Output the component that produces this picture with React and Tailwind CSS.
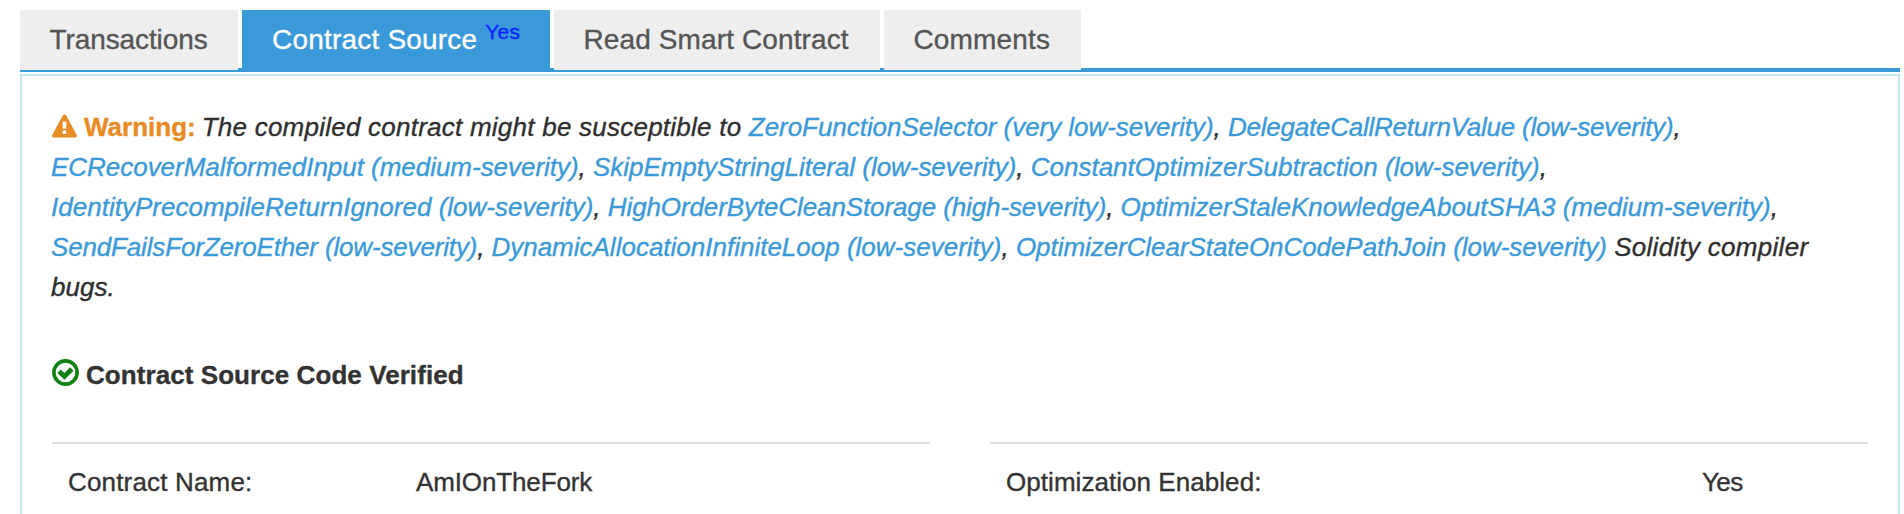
const tabs = [
  { label: 'Transactions', width: 'w-[218px]', tracking: 'tracking-[-0.1px]' },
  { label: 'Contract Source', badge: 'Yes', active: true, width: 'w-[308px]', tracking: 'tracking-[0.2px]' },
  { label: 'Read Smart Contract', width: 'w-[326px]', tracking: 'tracking-[0.12px]' },
  { label: 'Comments', width: 'w-[197px]', tracking: 'tracking-[0.15px]' },
];

const lines = [
  [
    ['ZeroFunctionSelector (very low-severity)', ', ', 'tracking-[-0.05px]'],
    ['DelegateCallReturnValue (low-severity)', ',', 'tracking-[-0.23px]'],
  ],
  [
    ['ECRecoverMalformedInput (medium-severity)', ', ', 'tracking-[-0.03px]'],
    ['SkipEmptyStringLiteral (low-severity)', ', ', 'tracking-[-0.04px]'],
    ['ConstantOptimizerSubtraction (low-severity)', ',', 'tracking-[0.01px]'],
  ],
  [
    ['IdentityPrecompileReturnIgnored (low-severity)', ', ', 'tracking-[0.01px]'],
    ['HighOrderByteCleanStorage (high-severity)', ', ', 'tracking-[-0.11px]'],
    ['OptimizerStaleKnowledgeAboutSHA3 (medium-severity)', ',', 'tracking-[0px]'],
  ],
  [
    ['SendFailsForZeroEther (low-severity)', ', ', 'tracking-[-0.16px]'],
    ['DynamicAllocationInfiniteLoop (low-severity)', ', ', 'tracking-[0px]'],
    ['OptimizerClearStateOnCodePathJoin (low-severity)', ' ', 'tracking-[-0.06px]'],
    ['', 'Solidity compiler', 'tracking-[0.29px]'],
  ],
];

function WarningIcon() {
  return (
    <svg viewBox="0 0 1792 1664" className="mr-[7px] inline-block h-[24px] w-[25px] align-[-2px]" fill="currentColor">
      <path d="M1024 1375v-190q0-14-9.5-23.5t-22.5-9.5h-192q-13 0-22.5 9.5t-9.5 23.5v190q0 14 9.5 23.5t22.5 9.5h192q13 0 22.5-9.5t9.5-23.5zm-2-374l18-459q0-12-10-19-13-11-24-11h-220q-11 0-24 11-10 7-10 21l17 457q0 10 10 16.5t24 6.5h185q14 0 23.5-6.5t10.5-16.5zm-14-934l768 1408q35 63-2 126-17 29-46.5 46t-63.5 17h-1536q-34 0-63.5-17t-46.5-46q-37-63-2-126l768-1408q17-31 47-49t65-18 65 18 47 49z" />
    </svg>
  );
}

function VerifiedIcon() {
  return (
    <svg viewBox="0 0 27 27" className="h-[27px] w-[27px]" fill="none" stroke="#108010">
      <circle cx="13.5" cy="13.5" r="11.6" strokeWidth="3.6" />
      <path d="M7 12.2l5.4 5.2 7.4-7.4" strokeWidth="4.8" />
    </svg>
  );
}

export default function App() {
  return (
    <div className="h-[514px] overflow-hidden bg-white pl-5 pr-1 pt-[10px] font-['Liberation_Sans',Arial,sans-serif] text-[26px] leading-[40px] text-[#333] [-webkit-text-stroke:0.35px_currentColor]">
      <div className="h-[62px] border-b-2 border-[#3a99d9]">
        <div className="flex h-[60px] gap-1 bg-[linear-gradient(#3a99d9,#3a99d9)] bg-[length:100%_2px] bg-bottom bg-no-repeat">
          {tabs.map((t, i) => (
            <div
              key={t.label}
              className={`${t.width} ${t.tracking} whitespace-nowrap pt-[10px] text-[28px] ${i === 0 ? 'pl-[29.5px]' : 'pl-[30px]'} ${t.active ? 'bg-[#3a99d9] text-white' : 'bg-[#eee] text-[#555]'} ${i > 0 && !t.active ? '-indent-[0.5px]' : ''}`}
            >
              {t.label}
              {t.badge && <sup className="relative -top-[10px] ml-2 align-baseline text-[21px] leading-none text-[#0b24fb]">{t.badge}</sup>}
            </div>
          ))}
        </div>
      </div>
      <div className="mt-[2px] h-[460px] border-2 border-[#bfe8ef] pl-[29px] pr-[30px] pt-[31px]">
        <div className="whitespace-pre italic text-[#2e2e2e]">
          {lines.map((line, i) => (
            <div key={i} className="h-10">
              {i === 0 && (
                <>
                  <b className="pl-px not-italic text-[#e88b24]"><WarningIcon />Warning:</b>
                  <span className="-ml-[1.5px] tracking-[0.24px]"> The compiled contract might be susceptible to </span>
                </>
              )}
              {line.map(([link, rest, tracking]) => (
                <span key={link + rest} className={tracking}>
                  {link && <a className="text-[#3a99d9]">{link}</a>}
                  {rest}
                </span>
              ))}
            </div>
          ))}
          <div className="h-10">bugs.</div>
        </div>
        <div className="mt-12 flex h-10 gap-[7px] pl-px font-bold tracking-[0.07px]">
          <span className="flex pt-1"><VerifiedIcon /></span>
          Contract Source Code Verified
        </div>
        <div className="mt-[47px] flex gap-[60px] pl-px">
          <div className="flex w-[878px] border-t-2 border-[#ddd] pt-[18px]">
            <div className="w-[348px] pl-4 tracking-[0.17px]">Contract Name:</div>
            <div className="pl-4 tracking-[-0.13px]">AmIOnTheFork</div>
          </div>
          <div className="flex w-[878px] border-t-2 border-[#ddd] pt-[18px]">
            <div className="w-[696px] pl-4 tracking-[0.05px]">Optimization Enabled:</div>
            <div className="pl-4 tracking-[-0.6px]">Yes</div>
          </div>
        </div>
      </div>
    </div>
  );
}
